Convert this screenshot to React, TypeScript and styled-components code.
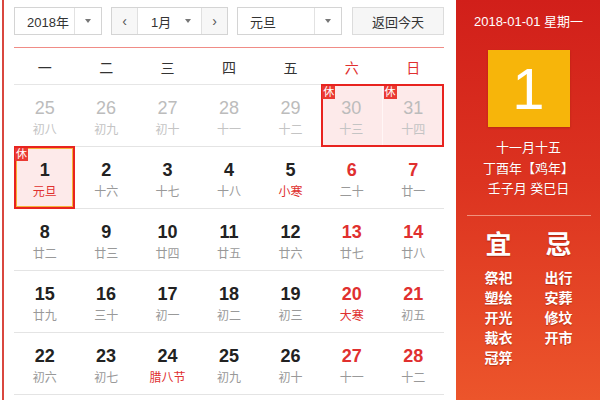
import React from "react";
import styled, { createGlobalStyle } from "styled-components";

const GlobalStyle = createGlobalStyle`
  html, body {
    margin: 0;
    padding: 0;
    background: #fff;
  }
  body {
    font-family: "Liberation Sans", "Noto Sans CJK SC", sans-serif;
    color: #333;
  }
`;

type Day = {
  num: number;
  lunar: string;
  other?: boolean;
  festival?: boolean;
  rest?: "single" | "left" | "right";
  selected?: boolean;
};

const weeks: Day[][] = [
  [
    { num: 25, lunar: "初八", other: true },
    { num: 26, lunar: "初九", other: true },
    { num: 27, lunar: "初十", other: true },
    { num: 28, lunar: "十一", other: true },
    { num: 29, lunar: "十二", other: true },
    { num: 30, lunar: "十三", other: true, rest: "left" },
    { num: 31, lunar: "十四", other: true, rest: "right" },
  ],
  [
    { num: 1, lunar: "元旦", festival: true, rest: "single", selected: true },
    { num: 2, lunar: "十六" },
    { num: 3, lunar: "十七" },
    { num: 4, lunar: "十八" },
    { num: 5, lunar: "小寒", festival: true },
    { num: 6, lunar: "二十" },
    { num: 7, lunar: "廿一" },
  ],
  [
    { num: 8, lunar: "廿二" },
    { num: 9, lunar: "廿三" },
    { num: 10, lunar: "廿四" },
    { num: 11, lunar: "廿五" },
    { num: 12, lunar: "廿六" },
    { num: 13, lunar: "廿七" },
    { num: 14, lunar: "廿八" },
  ],
  [
    { num: 15, lunar: "廿九" },
    { num: 16, lunar: "三十" },
    { num: 17, lunar: "初一" },
    { num: 18, lunar: "初二" },
    { num: 19, lunar: "初三" },
    { num: 20, lunar: "大寒", festival: true },
    { num: 21, lunar: "初五" },
  ],
  [
    { num: 22, lunar: "初六" },
    { num: 23, lunar: "初七" },
    { num: 24, lunar: "腊八节", festival: true },
    { num: 25, lunar: "初九" },
    { num: 26, lunar: "初十" },
    { num: 27, lunar: "十一" },
    { num: 28, lunar: "十二" },
  ],
];

const weekdays = ["一", "二", "三", "四", "五", "六", "日"];
const yi = ["祭祀", "塑绘", "开光", "裁衣", "冠笄"];
const ji = ["出行", "安葬", "修坟", "开市"];

const Wrapper = styled.div`
  display: flex;
  height: 400px;
  margin-left: 2px;
  border-left: 2px solid #d9473f;
  overflow: hidden;
`;

const Main = styled.div`
  width: 430px;
  padding: 7px 11px 0 10px;
  display: flex;
  flex-direction: column;
`;

const Toolbar = styled.div`
  display: flex;
  height: 28px;
  gap: 9px;
`;

const Select = styled.div<{ $w: number }>`
  width: ${(p) => p.$w}px;
  box-sizing: border-box;
  border: 1px solid #d4d4d4;
  display: flex;
  align-items: stretch;
  font-size: 13px;
  color: #333;
  background: #fff;
`;

const SelectText = styled.div`
  flex: 1;
  display: flex;
  align-items: center;
  padding-left: 12px;
`;

const Caret = styled.div`
  width: 26px;
  border-left: 1px solid #e2e2e2;
  display: flex;
  align-items: center;
  justify-content: center;
  &::after {
    content: "";
    border-left: 3.5px solid transparent;
    border-right: 3.5px solid transparent;
    border-top: 4px solid #777;
  }
`;

const MonthGroup = styled.div`
  width: 117px;
  box-sizing: border-box;
  border: 1px solid #d4d4d4;
  display: flex;
  font-size: 13px;
  background: #fff;
`;

const Arrow = styled.div<{ $side: "l" | "r" }>`
  width: 25px;
  display: flex;
  align-items: center;
  justify-content: center;
  background: #f7f7f7;
  color: #555;
  font-size: 14px;
  ${(p) => (p.$side === "l" ? "border-right" : "border-left")}: 1px solid #e0e0e0;
`;

const MonthText = styled.div`
  flex: 1;
  display: flex;
  align-items: center;
  justify-content: space-between;
  padding: 0 10px 0 13px;
  &::after {
    content: "";
    border-left: 3.5px solid transparent;
    border-right: 3.5px solid transparent;
    border-top: 4px solid #777;
  }
`;

const TodayButton = styled.button`
  margin-left: 1px;
  width: 92px;
  height: 28px;
  border: 1px solid #dcdcdc;
  background: #f6f6f6;
  font-family: inherit;
  font-size: 13px;
  color: #333;
  padding: 0;
`;

const RedRule = styled.div`
  margin-top: 12px;
  height: 1px;
  background: #f08c86;
`;

const WeekHeader = styled.div`
  display: grid;
  grid-template-columns: repeat(7, 1fr);
  height: 36px;
  border-bottom: 1px solid #e6e6e6;
`;

const WeekName = styled.div<{ $weekend: boolean }>`
  display: flex;
  align-items: center;
  justify-content: center;
  padding-top: 2px;
  font-size: 14px;
  color: ${(p) => (p.$weekend ? "#e0302f" : "#333")};
`;

const Row = styled.div`
  display: grid;
  grid-template-columns: repeat(7, 1fr);
  height: 62px;
  border-bottom: 1px solid #e4e4e4;
  box-sizing: border-box;
`;

const Cell = styled.div<{ $rest?: Day["rest"]; $selected?: boolean }>`
  position: relative;
  display: flex;
  flex-direction: column;
  align-items: center;
  padding-top: 13px;
  box-sizing: border-box;
  background: ${(p) => (p.$rest ? "#fdeaea" : "transparent")};
  ${(p) => p.$rest === "left" && "border-right: 1px solid #fff6f6;"}

  &::after {
    content: "";
    position: absolute;
    pointer-events: none;
    top: -1px;
    bottom: -1px;
    left: ${(p) => (p.$rest === "right" ? "0" : "0")};
    right: ${(p) => (p.$rest === "left" ? "-1px" : "0")};
    display: ${(p) => (p.$rest ? "block" : "none")};
    border: 2px solid #e8231f;
    ${(p) => p.$rest === "left" && "border-right: none;"}
    ${(p) => p.$rest === "right" && "border-left: none;"}
    ${(p) => p.$selected && "box-shadow: inset 0 0 0 1px #f6b23a;"}
  }
`;

const Badge = styled.span`
  position: absolute;
  top: 1px;
  left: 1px;
  width: 13px;
  height: 13px;
  background: #ea3a33;
  color: #fff;
  font-size: 11px;
  line-height: 13px;
  text-align: center;
  z-index: 1;
`;

const DayNum = styled.div<{ $other?: boolean; $weekend: boolean }>`
  font-size: 18px;
  line-height: 20px;
  font-weight: ${(p) => (p.$other ? "normal" : "bold")};
  color: ${(p) => (p.$other ? "#bcbcbc" : p.$weekend ? "#e0302f" : "#222")};
`;

const Lunar = styled.div<{ $other?: boolean; $festival?: boolean }>`
  margin-top: 4px;
  font-size: 12px;
  line-height: 16px;
  color: ${(p) => (p.$festival ? "#e0302f" : p.$other ? "#c4c4c4" : "#999")};
`;

const Side = styled.div`
  margin-left: 1px;
  width: 145px;
  flex-shrink: 0;
  background: linear-gradient(180deg, #d11f1a 0%, #dc3320 45%, #ec552b 100%);
  color: #fff;
  display: flex;
  flex-direction: column;
  align-items: center;
  padding-top: 14px;
  box-sizing: border-box;
`;

const DateLine = styled.div`
  font-size: 13px;
  line-height: 16px;
`;

const BigDay = styled.div`
  margin-top: 20px;
  width: 82px;
  height: 77px;
  background: #f7b50a;
  display: flex;
  align-items: center;
  justify-content: center;
  font-size: 58px;
  color: #fff;
  box-shadow: 0 1px 2px rgba(120, 30, 0, 0.35);
`;

const LunarInfo = styled.div`
  margin-top: 11px;
  font-size: 13px;
  line-height: 20.5px;
  text-align: center;
  text-shadow: 0 0 1px rgba(120, 20, 0, 0.4);
`;

const Divider = styled.div`
  margin-top: 15px;
  width: 124px;
  height: 1px;
  background: rgba(255, 220, 200, 0.55);
`;

const Almanac = styled.div`
  margin-top: 14px;
  display: grid;
  grid-template-columns: 60px 60px;
  justify-items: center;
  text-align: center;
`;

const AlmanacHead = styled.div`
  font-size: 26px;
  line-height: 30px;
  font-weight: bold;
  margin-bottom: 8px;
  text-shadow: 0 1px 1px rgba(120, 20, 0, 0.5);
`;

const AlmanacItem = styled.div`
  font-size: 14px;
  line-height: 20px;
  font-weight: bold;
  text-shadow: 0 1px 1px rgba(120, 20, 0, 0.45);
`;

const Column = styled.div`
  display: flex;
  flex-direction: column;
  align-items: center;
`;

export default function App() {
  return (
    <>
      <GlobalStyle />
      <Wrapper>
        <Main>
          <Toolbar>
            <Select $w={88}>
              <SelectText>2018年</SelectText>
              <Caret />
            </Select>
            <MonthGroup>
              <Arrow $side="l">‹</Arrow>
              <MonthText>1月</MonthText>
              <Arrow $side="r">›</Arrow>
            </MonthGroup>
            <Select $w={105}>
              <SelectText>元旦</SelectText>
              <Caret />
            </Select>
            <TodayButton>返回今天</TodayButton>
          </Toolbar>
          <RedRule />
          <WeekHeader>
            {weekdays.map((w, i) => (
              <WeekName key={w} $weekend={i >= 5}>
                {w}
              </WeekName>
            ))}
          </WeekHeader>
          {weeks.map((week, r) => (
            <Row key={r}>
              {week.map((d, i) => (
                <Cell key={i} $rest={d.rest} $selected={d.selected}>
                  {d.rest && <Badge>休</Badge>}
                  <DayNum $other={d.other} $weekend={i >= 5}>
                    {d.num}
                  </DayNum>
                  <Lunar $other={d.other} $festival={d.festival}>
                    {d.lunar}
                  </Lunar>
                </Cell>
              ))}
            </Row>
          ))}
        </Main>
        <Side>
          <DateLine>2018-01-01 星期一</DateLine>
          <BigDay>1</BigDay>
          <LunarInfo>
            <div>十一月十五</div>
            <div>丁酉年【鸡年】</div>
            <div>壬子月 癸巳日</div>
          </LunarInfo>
          <Divider />
          <Almanac>
            <Column>
              <AlmanacHead>宜</AlmanacHead>
              {yi.map((t) => (
                <AlmanacItem key={t}>{t}</AlmanacItem>
              ))}
            </Column>
            <Column>
              <AlmanacHead>忌</AlmanacHead>
              {ji.map((t) => (
                <AlmanacItem key={t}>{t}</AlmanacItem>
              ))}
            </Column>
          </Almanac>
        </Side>
      </Wrapper>
    </>
  );
}
